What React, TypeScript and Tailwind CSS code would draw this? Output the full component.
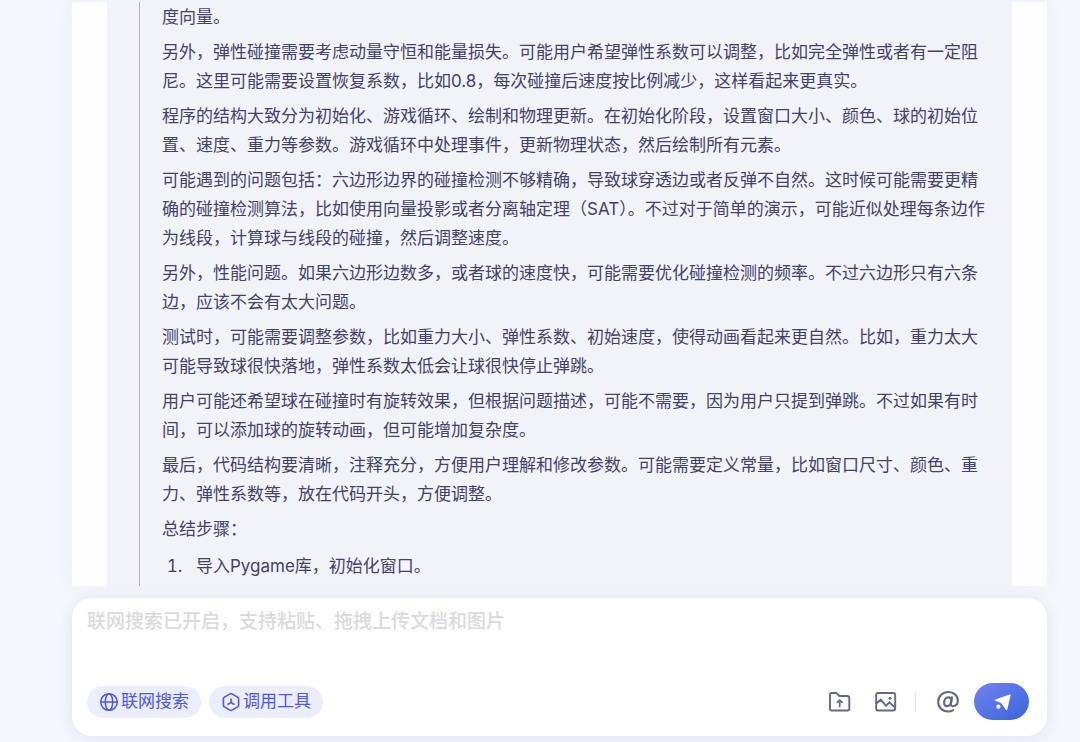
import React from "react";

const paragraphs: string[] = [
  "度向量。",
  "另外，弹性碰撞需要考虑动量守恒和能量损失。可能用户希望弹性系数可以调整，比如完全弹性或者有一定阻尼。这里可能需要设置恢复系数，比如0.8，每次碰撞后速度按比例减少，这样看起来更真实。",
  "程序的结构大致分为初始化、游戏循环、绘制和物理更新。在初始化阶段，设置窗口大小、颜色、球的初始位置、速度、重力等参数。游戏循环中处理事件，更新物理状态，然后绘制所有元素。",
  "可能遇到的问题包括：六边形边界的碰撞检测不够精确，导致球穿透边或者反弹不自然。这时候可能需要更精确的碰撞检测算法，比如使用向量投影或者分离轴定理（SAT）。不过对于简单的演示，可能近似处理每条边作为线段，计算球与线段的碰撞，然后调整速度。",
  "另外，性能问题。如果六边形边数多，或者球的速度快，可能需要优化碰撞检测的频率。不过六边形只有六条边，应该不会有太大问题。",
  "测试时，可能需要调整参数，比如重力大小、弹性系数、初始速度，使得动画看起来更自然。比如，重力太大可能导致球很快落地，弹性系数太低会让球很快停止弹跳。",
  "用户可能还希望球在碰撞时有旋转效果，但根据问题描述，可能不需要，因为用户只提到弹跳。不过如果有时间，可以添加球的旋转动画，但可能增加复杂度。",
  "最后，代码结构要清晰，注释充分，方便用户理解和修改参数。可能需要定义常量，比如窗口尺寸、颜色、重力、弹性系数等，放在代码开头，方便调整。",
  "总结步骤：",
];

function GlobeIcon() {
  return (
    <svg className="size-5" viewBox="0 0 20 20" fill="none" stroke="currentColor" strokeWidth="1.5" aria-hidden="true">
      <circle cx="10" cy="10" r="8.3" />
      <ellipse cx="10" cy="10" rx="3.7" ry="8.3" />
      <path d="M1.7 10h16.6" />
    </svg>
  );
}

function ToolIcon() {
  return (
    <svg className="size-5" viewBox="0 0 20 20" fill="none" stroke="currentColor" strokeWidth="1.6" strokeLinejoin="round" strokeLinecap="round" aria-hidden="true">
      <path d="M9 1.9a2 2 0 0 1 2 0l5.6 3.2a2 2 0 0 1 1 1.7v6.4a2 2 0 0 1-1 1.7L11 18.1a2 2 0 0 1-2 0l-5.6-3.2a2 2 0 0 1-1-1.7V6.8a2 2 0 0 1 1-1.7z" />
      <path d="M10 7v3.6M10 10.6l-2.900 1.700M10 10.600l2.900 1.700" />
    </svg>
  );
}

function FolderUploadIcon() {
  return (
    <svg className="size-6" viewBox="0 0 24 24" fill="none" stroke="currentColor" strokeWidth="1.900" strokeLinejoin="round" strokeLinecap="round" aria-hidden="true">
      <path d="M2 4.500A1.500 1.500 0 0 1 3.500 3h4.800l3 3h8.200a1.800 1.800 0 0 1 1.800 1.800v10.900a1.800 1.800 0 0 1-1.800 1.800H3.800A1.800 1.800 0 0 1 2 18.700z" />
      <path d="M11.700 16.400v-6M9.300 12.300l2.400-2.200 2.400 2.200" strokeWidth="1.700" />
    </svg>
  );
}

function PictureIcon() {
  return (
    <svg className="size-6" viewBox="0 0 24 24" fill="none" stroke="currentColor" strokeWidth="1.900" strokeLinejoin="round" strokeLinecap="round" aria-hidden="true">
      <rect x="2.200" y="3" width="19" height="17.500" rx="2" />
      <path d="M2.600 13.300L6.800 9.700l5.200 6.100 3.300-3.500 5.700 5.200" strokeLinejoin="miter" />
      <circle cx="16" cy="8.200" r="1.500" fill="currentColor" stroke="none" />
    </svg>
  );
}

function AtIcon() {
  return (
    <svg className="size-6" viewBox="0 0 24 24" fill="none" stroke="currentColor" strokeWidth="2.100" strokeLinecap="round" strokeLinejoin="round" aria-hidden="true">
      <path d="M16 7.400l-1.100 6.300c-.4 2 .7 2.700 2.200 2.500 2.900-.4 4.700-2.800 4.700-5.500C21.800 5.500 17.600 2 12.300 2 6.500 2 2.200 6.300 2.200 11.900c0 5.600 4.100 9.600 9.700 9.600 2 0 3.800-.5 5.400-1.400" />
      <path d="M15.400 10.100c-.2-1.700-1.300-2.700-3-2.700-2.500 0-4.300 2.300-4.300 5 0 2.100 1.100 3.700 3 3.700 2.200 0 3.900-2 4.300-6z" />
    </svg>
  );
}

function SendIcon() {
  return (
    <svg className="size-5" viewBox="0 0 20 20" fill="currentColor" aria-hidden="true">
      <path d="M17.700 2.400c.6-.2 1 .2.900.8l-3.300 14.300c-.2.800-1 .9-1.500.3L10 12.200c-.5-.7-1.300-1.300-2-1.800L3.300 8.800c-.7-.3-.7-1.100 0-1.400z" />
      <circle cx="6.400" cy="14.700" r="2.100" />
    </svg>
  );
}

function Chip({ icon, label }: { icon: React.ReactNode; label: string }) {
  return (
    <button type="button" className="flex h-8 items-center gap-0.5 rounded-full bg-[#ebeeff] px-3 text-[17px] text-[#4f55e6]">
      {icon}
      {label}
    </button>
  );
}

export default function App() {
  return (
    <div className="flex h-screen flex-col overflow-hidden bg-[#f4f6fc] pt-0.5 pr-[33px] pb-1.5 pl-[72px] font-['Inter','Noto_Sans_CJK_SC',sans-serif] text-[#42426b]">
      <main className="min-h-0 flex-1 overflow-hidden bg-[#fdfdfe] px-[35px] shadow-[0_0_20px_rgba(60,70,130,0.04)]">
        <div className="min-h-full bg-[#f2f3f9] pr-[21px] pl-8">
          <blockquote className="border-l border-[#aeb6d3] pt-px pl-[22px] text-[17px] leading-[29px]">
            <div className="flex flex-col gap-1.5">
              {paragraphs.map((text) => (
                <p key={text}>{text}</p>
              ))}
            </div>
            <ol className="list-decimal pt-2 pb-6 pl-[25px]">
              <li className="pl-[9px]">导入Pygame库，初始化窗口。</li>
            </ol>
          </blockquote>
        </div>
      </main>

      <form
        className="mt-3 flex shrink-0 flex-col rounded-[20px] bg-white px-[15px] pt-[9px] pb-4 shadow-[0_2px_14px_rgba(60,80,120,0.10)]"
        onSubmit={(e) => e.preventDefault()}
      >
        <textarea
          aria-label="消息"
          rows={2}
          placeholder="联网搜索已开启，支持粘贴、拖拽上传文档和图片"
          className="w-full resize-none text-[19px] leading-[30px] font-medium outline-none placeholder:text-[#d9dadd]"
        />
        <div className="mt-4 flex items-center justify-between">
          <div className="flex items-center gap-2">
            <Chip icon={<GlobeIcon />} label="联网搜索" />
            <Chip icon={<ToolIcon />} label="调用工具" />
          </div>
          <div className="flex items-center pr-[3px] text-[#646882]">
            <button type="button" aria-label="上传文件">
              <FolderUploadIcon />
            </button>
            <button type="button" aria-label="上传图片" className="ml-[22px]">
              <PictureIcon />
            </button>
            <span className="ml-[17px] h-5 w-px bg-[#e3e5ee]" />
            <button type="button" aria-label="提及" className="ml-5">
              <AtIcon />
            </button>
            <button
              type="submit"
              aria-label="发送"
              className="ml-[14px] flex h-[37px] w-[55px] items-center justify-center rounded-full bg-linear-to-br from-[#7480ee] to-[#3467dc] text-white"
            >
              <SendIcon />
            </button>
          </div>
        </div>
      </form>
    </div>
  );
}
